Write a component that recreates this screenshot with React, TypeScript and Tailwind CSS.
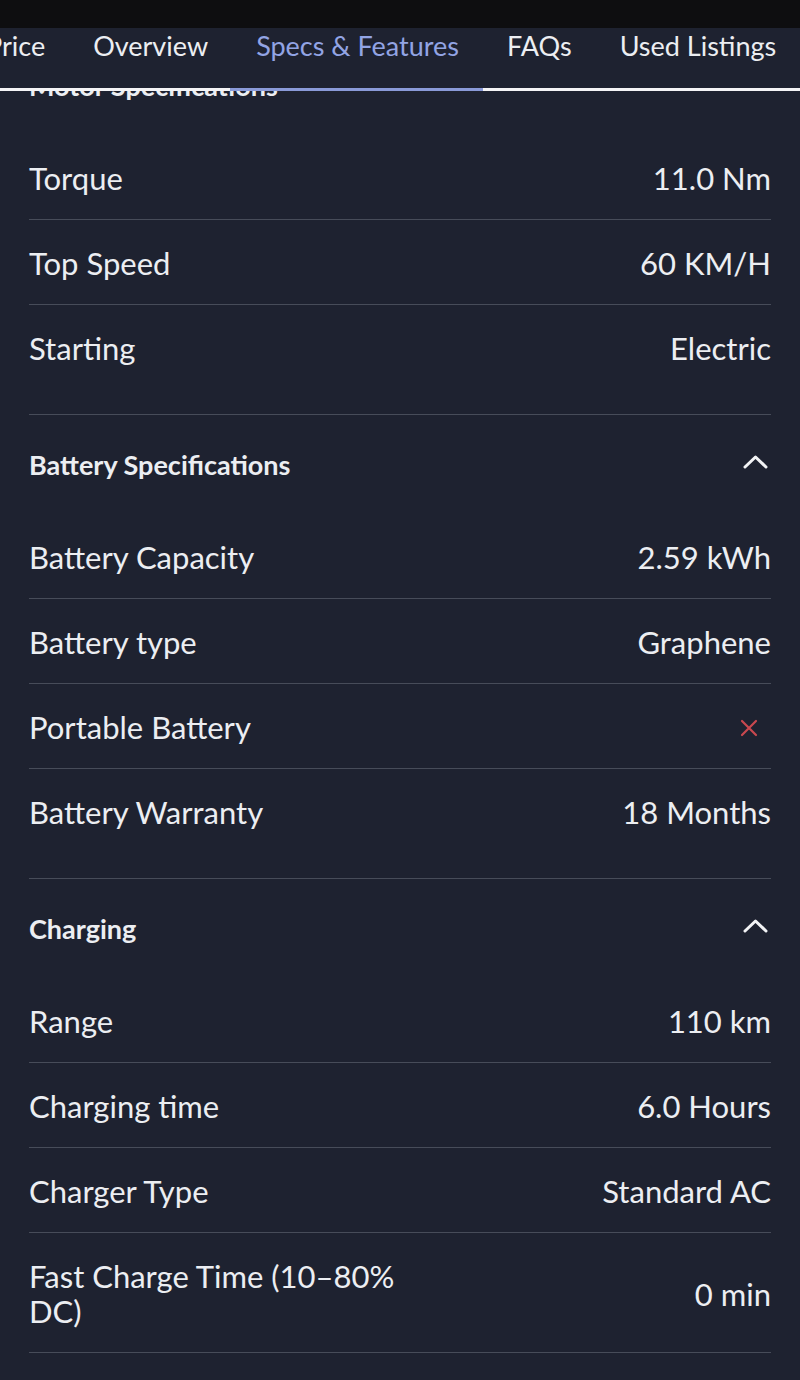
type Row = { label: string; value?: string; cross?: boolean };

const motor: Row[] = [
  { label: "Torque", value: "11.0 Nm" },
  { label: "Top Speed", value: "60 KM/H" },
  { label: "Starting", value: "Electric" },
];

const battery: Row[] = [
  { label: "Battery Capacity", value: "2.59 kWh" },
  { label: "Battery type", value: "Graphene" },
  { label: "Portable Battery", cross: true },
  { label: "Battery Warranty", value: "18 Months" },
];

const charging: Row[] = [
  { label: "Range", value: "110 km" },
  { label: "Charging time", value: "6.0 Hours" },
  { label: "Charger Type", value: "Standard AC" },
  { label: "Fast Charge Time (10–80% DC)", value: "0 min" },
  { label: "", value: "" },
];

function Cross() {
  return (
    <svg width="20" height="20" viewBox="0 0 20 20" className="mr-[12px]">
      <path d="M3 3 L17 17 M17 3 L3 17" stroke="#c9484f" strokeWidth="2.2" strokeLinecap="round" />
    </svg>
  );
}

function Chevron() {
  return (
    <svg width="28" height="18" viewBox="0 0 28 18" className="mb-[8px] mr-[1px]">
      <path d="M3 14 L13.5 4 L24 14" fill="none" stroke="#f2f3f5" strokeWidth="3" strokeLinecap="round" strokeLinejoin="round" />
    </svg>
  );
}

function SpecRows({ rows }: { rows: Row[] }) {
  return (
    <div className="divide-y divide-[#474c59]">
      {rows.map((r, i) => (
        <div key={i} className="flex min-h-[84px] items-center justify-between gap-6 pt-[26px] pb-[23px]">
          <span className="max-w-[400px] leading-[35px]">{r.label}</span>
          {r.cross ? <Cross /> : <span className="whitespace-nowrap leading-[35px]">{r.value}</span>}
        </div>
      ))}
    </div>
  );
}

function Section({ title, rows, last }: { title: string; rows: Row[]; last?: boolean }) {
  return (
    <div className={last ? "" : "border-b border-[#474c59] pb-[25px]"}>
      <div className="flex h-[99px] items-center justify-between pt-[2px]">
        <span className="text-[27px] font-bold">{title}</span>
        <Chevron />
      </div>
      <SpecRows rows={rows} />
    </div>
  );
}

export default function App() {
  return (
    <div
      className="relative h-[1380px] w-[800px] overflow-hidden bg-[#1e2230] text-[#eceef2]"
      style={{ fontFamily: "Lato, 'Open Sans', sans-serif" }}
    >
      <div className="h-[28px] bg-[#0e0e10]" />

      <div className="absolute left-0 right-0 top-[28px] z-10 h-[63px] bg-[#1e2230]">
        <div className="ml-[-14px] flex gap-[48px] whitespace-nowrap pt-[3px] text-[27px] leading-[30px]">
          <span>Price</span>
          <span>Overview</span>
          <span className="text-[#92a4e4]">Specs &amp; Features</span>
          <span>FAQs</span>
          <span>Used Listings</span>
        </div>
        <div className="absolute bottom-0 left-0 right-0 h-[3px] bg-[#f4f4f6]" />
        <div className="absolute bottom-0 left-[230px] h-[3px] w-[253px] bg-[#8a9ad8]" />
      </div>

      <div className="mx-[29px] mt-[8px] text-[31px]">
        <Section title="Motor Specifications" rows={motor} />
        <Section title="Battery Specifications" rows={battery} />
        <Section title="Charging" rows={charging} last />
      </div>
    </div>
  );
}
